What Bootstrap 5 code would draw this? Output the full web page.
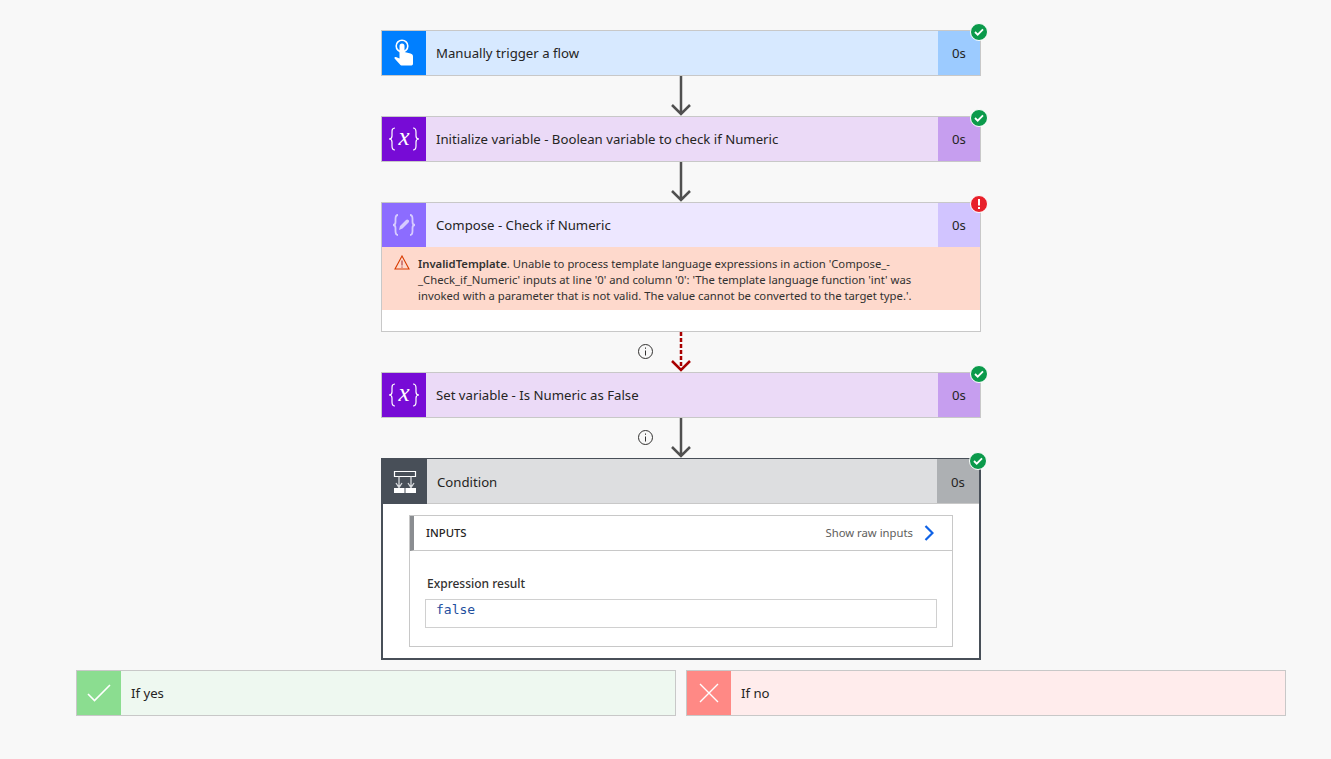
<!DOCTYPE html>
<html lang="en"><head><meta charset="utf-8"><title>Flow run</title>
<link href="https://cdn.jsdelivr.net/npm/bootstrap@5.3.0/dist/css/bootstrap.min.css" rel="stylesheet">
<style>
html,body{height:100%}
body{background:#f8f8f8;font-family:"Noto Sans","Open Sans",sans-serif;color:#252423;font-size:13.2px;overflow:hidden}
.canvas{width:1210px;margin-left:76px;padding-top:30px}
.stepbox{width:600px;border:1px solid #c8c8c8;background:#fff;position:relative}
.stephead{height:44px}
.stepicon{width:44px;height:44px;color:#fff}
.steptitle{padding-left:10px;line-height:44px}
.stepdur{width:42px;text-align:center;line-height:44px}
.t-manual .stepicon{background:#007fff}.t-manual .stephead{background:#d7e9ff}.t-manual .stepdur{background:#9ccbff}
.t-var .stepicon{background:#770bd6}.t-var .stephead{background:#ebdaf7}.t-var .stepdur{background:#c69eef}
.t-comp .stepicon{background:#8c6cff}.t-comp .stephead{background:#ede7ff}.t-comp .stepdur{background:#d1c4ff}
.statusdot{position:absolute;top:-8px;right:-8px;width:18px;height:18px;border-radius:50%;border:1px solid #fff;background:#0b9a4b}
.statusdot.bad{background:#e8202a}
.errpane{height:63px;background:#fed9cc;padding:9px 60px 0 36px;font-size:11.3px;line-height:16px;position:relative;color:#323130}
.errpane b{font-weight:600}
.errpane svg{position:absolute;left:12px;top:8px}
.errtail{height:21px}
.link{height:40px;width:600px;position:relative}
.link svg.arrow{position:absolute;left:285px;top:0}
.link svg.info{position:absolute;left:256px;top:11px}
.condbox{width:600px;height:202px;border:2px solid #484f58;background:#fff;position:relative}
.condhead{height:45px;background:#dddee0;border-bottom:1px solid #c8c8c8;margin-top:-1px}
.condicon{width:45px;height:45px;background:#484f58;margin-left:-1px;flex:none}
.condbox .statusdot{top:-8px;right:-8px}
.condhead .steptitle{line-height:46px}
.conddur{width:42px;background:#adb0b3;text-align:center;line-height:46px}
.inpanel{margin:11px 26px 0 26px;height:132px;border:1px solid #c8c8c8}
.inhead{height:35px;border-bottom:1px solid #c8c8c8;border-left:4px solid #8a8d91;padding:0 18px 0 12px;font-size:11.3px}
.inhead strong{font-weight:500}
.inraw{color:#605e5c}
.inchev{margin-left:3px}
.inbody{padding:24px 15px 0}
.inlabel{font-size:12px;font-weight:500;line-height:18px;color:#323130;padding-left:2px}
.inval{margin-top:6px;height:29px;border:1px solid #d0d0d0;padding:1px 10px 0;font:13px/18px "DejaVu Sans Mono",monospace;color:#1f4f9e}
.branches{margin-top:10px;gap:10px}
.branch{width:600px;height:46px;border:1px solid #c8c8c8}
.branchicon{width:44px;height:44px}
.b-yes{background:#eef8f0}.b-yes .branchicon{background:#8bdd90}
.b-no{background:#ffecec}.b-no .branchicon{background:#ff8985}
</style></head>
<body>
<main class="canvas d-flex flex-column align-items-center">

<section class="stepbox t-manual">
 <div class="stephead d-flex align-items-center">
  <div class="stepicon d-flex align-items-center justify-content-center">
   <svg width="20" height="28" viewBox="0 0 20 28"><circle cx="8" cy="7" r="5.800" fill="none" stroke="#fff" stroke-width="1.600"/><path d="M5.500 7a2.500 2.500 0 0 1 5 0v6l6 1.500c1.500.4 2.500 1.300 2.500 3v7c0 1-.6 2-1.500 2H8c-1 0-1.500-.3-2-1L.6 19.500c-.6-.9.1-1.800 1.300-1.500l3.600 1.500z" fill="#fff"/></svg>
  </div>
  <div class="steptitle flex-grow-1">Manually trigger a flow</div>
  <div class="stepdur">0s</div>
 </div>
 <span class="statusdot d-flex align-items-center justify-content-center"><svg width="10" height="8" viewBox="0 0 10 8"><path d="M1 4l2.700 2.700L9 1.300" fill="none" stroke="#fff" stroke-width="1.800"/></svg></span>
</section>

<div class="link"><svg class="arrow" width="30" height="40" viewBox="0 0 30 40"><path d="M15 0v38M6 29l9 9 9-9" fill="none" stroke="#505050" stroke-width="2.500"/></svg></div>

<section class="stepbox t-var">
 <div class="stephead d-flex align-items-center">
  <div class="stepicon d-flex align-items-center justify-content-center">
   <svg width="32" height="40" viewBox="0 -7 32 40"><path d="M7 2C4 2 4 4 4 6v4c0 2-1 3-3 3 2 0 3 1 3 3v4c0 2 0 4 3 4M25 2c3 0 3 2 3 4v4c0 2 1 3 3 3-2 0-3 1-3 3v4c0 2 0 4-3 4" fill="none" stroke="#fff" stroke-width="1.200"/><text x="16" y="19" text-anchor="middle" fill="#fff" font-family="Liberation Serif,serif" font-style="italic" font-size="25">x</text></svg>
  </div>
  <div class="steptitle flex-grow-1">Initialize variable - Boolean variable to check if Numeric</div>
  <div class="stepdur">0s</div>
 </div>
 <span class="statusdot d-flex align-items-center justify-content-center"><svg width="10" height="8" viewBox="0 0 10 8"><path d="M1 4l2.700 2.700L9 1.300" fill="none" stroke="#fff" stroke-width="1.800"/></svg></span>
</section>

<div class="link"><svg class="arrow" width="30" height="40" viewBox="0 0 30 40"><path d="M15 0v38M6 29l9 9 9-9" fill="none" stroke="#505050" stroke-width="2.500"/></svg></div>

<section class="stepbox t-comp">
 <div class="stephead d-flex align-items-center">
  <div class="stepicon d-flex align-items-center justify-content-center">
   <svg width="24" height="22" viewBox="0 0 24 22" opacity=".65"><path d="M6 1C3.500 1 3.500 3 3.500 5v3c0 1.800-1 3-2.500 3 1.500 0 2.500 1.200 2.500 3v3c0 2 0 4 2.500 4M18 1c2.500 0 2.500 2 2.500 4v3c0 1.800 1 3 2.500 3-1.500 0-2.500 1.200-2.500 3v3c0 2 0 4-2.500 4" fill="none" stroke="#fff" stroke-width="1.800"/><path d="M7 16l1-4 6-6c.8-.8 1.800-.8 2.500 0s.8 1.700 0 2.500l-6 6z" fill="#fff"/></svg>
  </div>
  <div class="steptitle flex-grow-1">Compose - Check if Numeric</div>
  <div class="stepdur">0s</div>
 </div>
 <div class="errpane">
  <svg width="16" height="15" viewBox="0 0 16 15"><path d="M8 1L1 14h14z" fill="none" stroke="#d83b01" stroke-width="1.100"/><path d="M8 5.500v5M8 11.500v1.200" stroke="#a4262c" stroke-width="1"/></svg>
  <b>InvalidTemplate</b>. Unable to process template language expressions in action 'Compose_-_Check_if_Numeric' inputs at line '0' and column '0': 'The template language function 'int' was invoked with a parameter that is not valid. The value cannot be converted to the target type.'.
 </div>
 <div class="errtail"></div>
 <span class="statusdot bad d-flex align-items-center justify-content-center"><svg width="4" height="12" viewBox="0 0 4 12"><path d="M2 1v6.500M2 9v2" stroke="#fff" stroke-width="2"/></svg></span>
</section>

<div class="link"><svg class="info" width="17" height="17" viewBox="0 0 17 17"><circle cx="8.500" cy="8.500" r="7" fill="none" stroke="#323130"/><path d="M8.500 7.500v5M8.500 4.500v1.300" stroke="#323130"/></svg><svg class="arrow" width="30" height="40" viewBox="0 0 30 40"><path d="M15 0v36" stroke="#a80000" stroke-width="2.500" stroke-dasharray="4 2" fill="none"/><path d="M6 29l9 9 9-9" fill="none" stroke="#a80000" stroke-width="2.500"/></svg></div>

<section class="stepbox t-var">
 <div class="stephead d-flex align-items-center">
  <div class="stepicon d-flex align-items-center justify-content-center">
   <svg width="32" height="40" viewBox="0 -7 32 40"><path d="M7 2C4 2 4 4 4 6v4c0 2-1 3-3 3 2 0 3 1 3 3v4c0 2 0 4 3 4M25 2c3 0 3 2 3 4v4c0 2 1 3 3 3-2 0-3 1-3 3v4c0 2 0 4-3 4" fill="none" stroke="#fff" stroke-width="1.200"/><text x="16" y="19" text-anchor="middle" fill="#fff" font-family="Liberation Serif,serif" font-style="italic" font-size="25">x</text></svg>
  </div>
  <div class="steptitle flex-grow-1">Set variable - Is Numeric as False</div>
  <div class="stepdur">0s</div>
 </div>
 <span class="statusdot d-flex align-items-center justify-content-center"><svg width="10" height="8" viewBox="0 0 10 8"><path d="M1 4l2.700 2.700L9 1.300" fill="none" stroke="#fff" stroke-width="1.800"/></svg></span>
</section>

<div class="link"><svg class="info" width="17" height="17" viewBox="0 0 17 17"><circle cx="8.500" cy="8.500" r="7" fill="none" stroke="#323130"/><path d="M8.500 7.500v5M8.500 4.500v1.300" stroke="#323130"/></svg><svg class="arrow" width="30" height="40" viewBox="0 0 30 40"><path d="M15 0v38M6 29l9 9 9-9" fill="none" stroke="#505050" stroke-width="2.500"/></svg></div>

<section class="condbox">
 <div class="condhead d-flex">
  <div class="condicon d-flex align-items-center justify-content-center">
   <svg width="24" height="24" viewBox="0 0 24 24"><path d="M1.500 1.500h21v5h-21z" fill="none" stroke="#fff" stroke-width="1.200"/><path d="M6 6.500v11M18 6.500v11M3 13l3 4.500L9 13M15 13l3 4.500 3-4.500" fill="none" stroke="#d8dadd" stroke-width="1.300"/><path d="M1 18h10.500v5H1zM12.500 18H23v5H12.500z" fill="#fff"/></svg>
  </div>
  <div class="steptitle flex-grow-1">Condition</div>
  <div class="conddur">0s</div>
 </div>
 <span class="statusdot d-flex align-items-center justify-content-center"><svg width="10" height="8" viewBox="0 0 10 8"><path d="M1 4l2.700 2.700L9 1.300" fill="none" stroke="#fff" stroke-width="1.800"/></svg></span>
 <div class="inpanel">
  <div class="inhead d-flex align-items-center justify-content-between">
   <strong>INPUTS</strong>
   <span class="inraw d-flex align-items-center gap-2">Show raw inputs <svg class="inchev" width="10" height="16" viewBox="0 0 10 16"><path d="M1.500 1l7 7-7 7" fill="none" stroke="#0f62e6" stroke-width="2.200"/></svg></span>
  </div>
  <div class="inbody">
   <div class="inlabel">Expression result</div>
   <div class="inval">false</div>
  </div>
 </div>
</section>

<div class="branches d-flex">
 <div class="branch b-yes d-flex align-items-center">
  <div class="branchicon d-flex align-items-center justify-content-center"><svg width="24" height="18" viewBox="0 0 24 18"><path d="M1 10l6.500 6.500L23 1" fill="none" stroke="#fff" stroke-width="1.600"/></svg></div>
  <div class="steptitle">If yes</div>
 </div>
 <div class="branch b-no d-flex align-items-center">
  <div class="branchicon d-flex align-items-center justify-content-center"><svg width="20" height="20" viewBox="0 0 20 20"><path d="M1 1l18 18M19 1L1 19" fill="none" stroke="#fff" stroke-width="1.400"/></svg></div>
  <div class="steptitle">If no</div>
 </div>
</div>

</main>
</body></html>
